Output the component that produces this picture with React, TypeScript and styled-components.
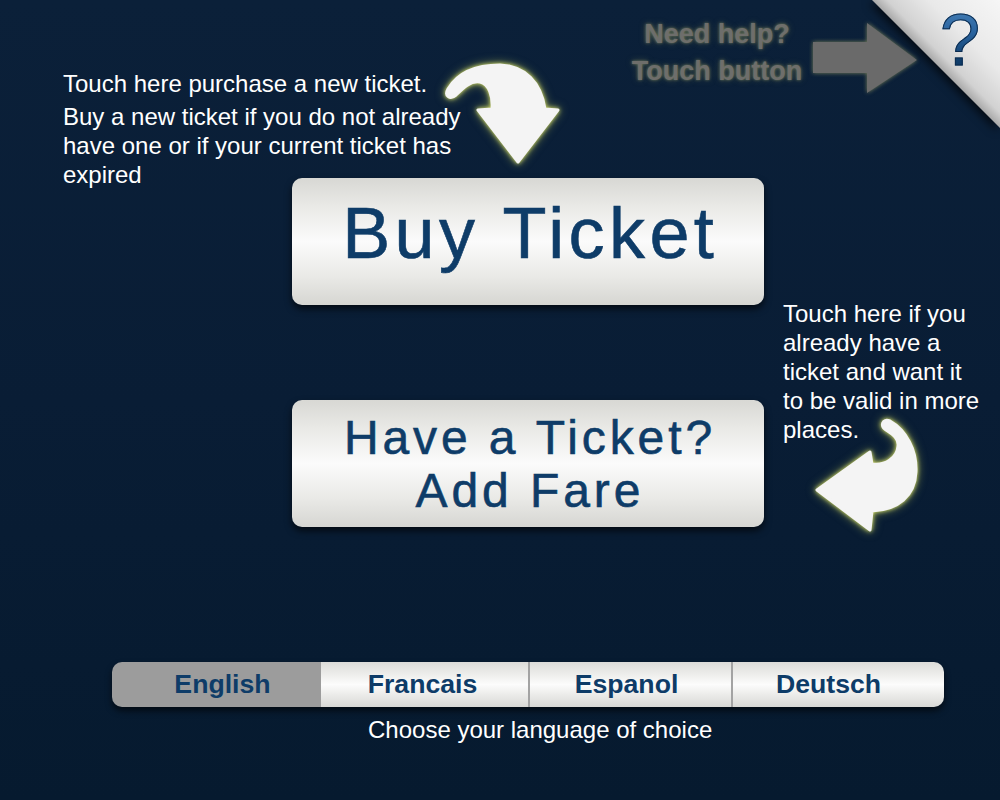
import React from "react";
import styled, { createGlobalStyle } from "styled-components";

const GlobalStyle = createGlobalStyle`
  html, body {
    margin: 0;
    padding: 0;
    background: #081c33;
  }
  body {
    font-family: "Liberation Sans", Arial, Helvetica, sans-serif;
  }
  * { box-sizing: border-box; }
`;

const Screen = styled.div`
  position: relative;
  width: 1000px;
  height: 800px;
  overflow: hidden;
  background: linear-gradient(to bottom, #0b2039 0%, #091d35 50%, #061a2f 100%);
  display: grid;
  grid-template-columns: 292px 472px 1fr;
  grid-template-rows: 178px 127px 95px 127px 135px 45px auto;
  font-family: "Liberation Sans", Arial, Helvetica, sans-serif;
`;

const Intro = styled.div`
  grid-column: 1 / 3;
  grid-row: 1;
  padding: 69px 0 0 63px;
  max-width: 475px;
  color: #ffffff;
  font-size: 24px;
  line-height: 29px;
`;

const Para = styled.p<{ $gap?: number }>`
  margin: 0 0 ${(p) => p.$gap ?? 0}px 0;
`;

const DownArrow = styled.svg`
  grid-column: 2;
  grid-row: 1;
  justify-self: start;
  align-self: start;
  margin: 60px 0 0 148px;
  overflow: visible;
  filter: drop-shadow(0 0 2px rgba(222, 232, 110, 0.95)) drop-shadow(0 0 4px rgba(200, 210, 90, 0.55));
`;

const HelpHint = styled.div`
  grid-column: 2 / 4;
  grid-row: 1;
  justify-self: end;
  align-self: start;
  margin-right: 78px;
  display: flex;
  align-items: flex-start;
  gap: 2px;
`;

const HintText = styled.div`
  margin-top: 16px;
  width: 178px;
  text-align: center;
  color: #6e6e6b;
  font-weight: bold;
  font-size: 27px;
  line-height: 37px;
  text-shadow: 0 0 3px rgba(200, 200, 120, 0.5), 0 0 7px rgba(160, 160, 90, 0.35);
`;

const HintArrow = styled.svg`
  margin-top: 18px;
  overflow: visible;
  filter: drop-shadow(0 0 2px rgba(190, 190, 110, 0.6));
`;

const Corner = styled.button`
  position: absolute;
  top: 0;
  right: 0;
  width: 128px;
  height: 128px;
  border: none;
  padding: 0 20px 0 0;
  margin: 0;
  display: flex;
  justify-content: flex-end;
  align-items: flex-start;
  background: transparent;
  filter: drop-shadow(-3px 3px 4px rgba(0, 0, 0, 0.65));
  cursor: pointer;

  &::before {
    content: "";
    position: absolute;
    inset: 0;
    clip-path: polygon(0 0, 100% 0, 100% 100%);
    background: linear-gradient(to bottom left, #f6f6f6 0%, #e9e9e9 28%, #d2d2d2 44%, #a9a9a9 50%);
  }
`;

const Question = styled.span`
  position: relative;
  font-family: "Liberation Sans", Arial, sans-serif;
  font-size: 72px;
  line-height: 80px;
  background: linear-gradient(to bottom, #4d86bb 0%, #2a64a0 40%, #103e6c 75%, #0b2f57 100%);
  -webkit-background-clip: text;
  background-clip: text;
  color: transparent;
  -webkit-text-stroke: 1px #0b2b4e;
`;

const BigButton = styled.button<{ $row: number; $size: number; $lh: number; $shift: number; $ls: number }>`
  grid-column: 2;
  grid-row: ${(p) => p.$row};
  width: 100%;
  height: 100%;
  margin: 0;
  border: none;
  border-radius: 10px;
  display: flex;
  align-items: center;
  justify-content: center;
  padding: 0 0 ${(p) => p.$shift}px ${(p) => p.$ls}px;
  background: linear-gradient(
    to bottom,
    #d8d8d4 0%,
    #e9e9e6 22%,
    #fbfbfb 50%,
    #e9e9e6 78%,
    #d6d6d2 100%
  );
  box-shadow: 0 4px 7px rgba(0, 0, 0, 0.65);
  color: #0e3c68;
  -webkit-text-stroke: 0.6px #0e3c68;
  font-family: "Liberation Sans", Arial, sans-serif;
  font-size: ${(p) => p.$size}px;
  line-height: ${(p) => p.$lh}px;
  letter-spacing: ${(p) => p.$ls}px;
  text-align: center;
  cursor: pointer;
`;

const SideNote = styled.div`
  grid-column: 3;
  grid-row: 3 / 5;
  align-self: start;
  margin-top: -6px;
  padding-left: 19px;
  width: 219px;
  color: #ffffff;
  font-size: 24px;
  line-height: 29px;
`;

const LeftArrow = styled.svg`
  grid-column: 3;
  grid-row: 4;
  justify-self: start;
  align-self: start;
  margin: 12px 0 0 46px;
  overflow: visible;
  filter: drop-shadow(0 0 2px rgba(222, 232, 110, 0.95)) drop-shadow(0 0 4px rgba(200, 210, 90, 0.55));
`;

const LangBar = styled.div`
  grid-column: 1 / 4;
  grid-row: 6;
  justify-self: start;
  margin-left: 112px;
  width: 832px;
  height: 45px;
  display: flex;
  border-radius: 10px;
  overflow: hidden;
  box-shadow: 0 4px 6px rgba(0, 0, 0, 0.6);
`;

const LangButton = styled.button<{ $active?: boolean; $divider?: boolean; $w: number; $nudge: number }>`
  flex: 0 0 ${(p) => p.$w}px;
  margin: 0;
  padding: 0 ${(p) => (p.$nudge < 0 ? -2 * p.$nudge : 0)}px 0 ${(p) => (p.$nudge > 0 ? 2 * p.$nudge : 0)}px;
  border: none;
  border-left: ${(p) => (p.$divider ? "2px solid #a3a3a3" : "none")};
  background: ${(p) =>
    p.$active
      ? "#9c9c9c"
      : "linear-gradient(to bottom, #dcdcd9 0%, #efefed 30%, #fcfcfc 50%, #ececea 72%, #d8d8d5 100%)"};
  color: #0e3c68;
  font-family: "Liberation Sans", Arial, sans-serif;
  font-weight: bold;
  font-size: 26.67px;
  line-height: 45px;
  cursor: pointer;
`;

const Caption = styled.div`
  grid-column: 1 / 4;
  grid-row: 7;
  justify-self: start;
  margin: 8px 0 0 368px;
  color: #ffffff;
  font-size: 24px;
  line-height: 29px;
`;

const languages = [
  { label: "English", w: 209, nudge: 6 },
  { label: "Francais", w: 207, nudge: -2 },
  { label: "Espanol", w: 203, nudge: -4 },
  { label: "Deutsch", w: 213, nudge: -10 },
];

export default function App() {
  return (
    <>
      <GlobalStyle />
      <Screen>
        <Intro>
          <Para $gap={4}>Touch here purchase a new ticket.</Para>
          <Para>
            Buy a new ticket if you do not already have one or if your current ticket has expired
          </Para>
        </Intro>

        <DownArrow width="125" height="110" viewBox="440 60 125 110">
          <path
            d="M 478 110 L 492 109 C 493 96 489 84 480 82 C 471 80 463 88 456 95 C 450 100 444 96 448 89 C 458 72 475 65 500 65 C 525 66 541 82 545 109 L 558 110 L 518 162 Z"
            fill="#f4f4f4"
            stroke="#f4f4f4"
            strokeWidth="3"
            strokeLinejoin="round"
          />
        </DownArrow>

        <HelpHint>
          <HintText>
            Need help?
            <br />
            Touch button
          </HintText>
          <HintArrow width="114" height="80" viewBox="808 18 114 80">
            <path
              d="M 813 42 L 867 42 L 867 23 L 917 60 L 867 93 L 867 73 L 813 73 Z"
              fill="#6a6a6a"
            />
          </HintArrow>
        </HelpHint>

        <BigButton $row={2} $size={72} $lh={80} $shift={18} $ls={4.4}>
          Buy Ticket
        </BigButton>

        <SideNote>Touch here if you already have a ticket and want it to be valid in more places.</SideNote>

        <BigButton $row={4} $size={48} $lh={53} $shift={0} $ls={3.9}>
          Have a Ticket?
          <br />
          Add Fare
        </BigButton>

        <LeftArrow width="112" height="124" viewBox="810 412 112 124">
          <path
            d="M 870 452 L 872 464 C 885 466 897 458 898 446 C 899 438 892 434 886 430 C 880 426 882 418 890 421 C 906 430 917 450 916 472 C 915 496 898 510 872 511 L 870 530 L 817 490 Z"
            fill="#f4f4f4"
            stroke="#f4f4f4"
            strokeWidth="3"
            strokeLinejoin="round"
          />
        </LeftArrow>

        <LangBar>
          {languages.map((l, i) => (
            <LangButton key={l.label} $active={i === 0} $divider={i > 1} $w={l.w} $nudge={l.nudge}>
              {l.label}
            </LangButton>
          ))}
        </LangBar>

        <Caption>Choose your language of choice</Caption>

        <Corner aria-label="Help">
          <Question>?</Question>
        </Corner>
      </Screen>
    </>
  );
}
